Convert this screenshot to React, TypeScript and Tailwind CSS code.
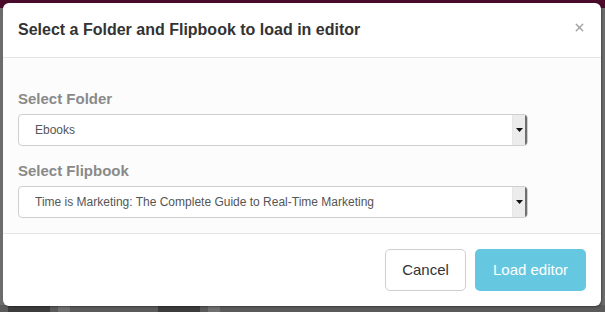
import { X } from 'lucide-react';

function SelectBox({ value }: { value: string }) {
  return (
    <div className="flex h-[32px] w-[510px] items-stretch overflow-hidden rounded-[4px] border border-[#cfcfcf] bg-white">
      <div className="flex flex-1 items-center pl-[16px] text-[12px] text-[#555]">{value}</div>
      <div className="flex w-[15px] items-center justify-center border-l border-[#e6e6e6] border-r-2 border-r-[#6f6f6f] bg-[#ececec]">
        <svg width="7" height="4" viewBox="0 0 7 4">
          <path d="M0 0h7L3.5 4z" fill="#111" />
        </svg>
      </div>
    </div>
  );
}

export default function App() {
  return (
    <div
      className="relative h-[312px] w-[605px] overflow-hidden bg-[#6c6c6c]"
      style={{ fontFamily: '"Liberation Sans", Arial, sans-serif' }}
    >
      <div className="h-[8px] bg-[#4a0b2b]" />
      <div className="absolute bottom-0 left-0 right-0 flex h-[7px] items-end gap-[8px] bg-[#5a5a5a] pl-[8px]">
        <div className="h-[6px] w-[42px] bg-[#3c3c3c]" />
        <div className="h-[6px] w-[12px] bg-[#707070]" />
        <div className="ml-[80px] h-[6px] w-[42px] bg-[#3c3c3c]" />
        <div className="h-[6px] w-[12px] bg-[#707070]" />
      </div>

      <div className="absolute left-[3px] top-[3px] flex h-[303px] w-[598px] flex-col overflow-hidden rounded-[6px] bg-white shadow-[1px_1px_2px_rgba(0,0,0,0.35)]">
        <header className="flex h-[55px] items-center justify-between border-b border-[#e5e5e5] pl-[15px] pr-[15px]">
          <h4 className="text-[16px] font-bold text-[#333]">
            Select a Folder and Flipbook to load in editor
          </h4>
          <X size={13} strokeWidth={2.6} className="mb-[6px] text-[#a0a0a0]" />
        </header>

        <div className="flex h-[175px] flex-col bg-[#fcfcfc] pl-[15px] pt-[31px]">
          <label className="text-[15px] font-bold leading-[20px] text-[#8a8a8a]">Select Folder</label>
          <div className="mt-[5px]">
            <SelectBox value="Ebooks" />
          </div>
          <label className="mt-[15px] text-[15px] font-bold leading-[20px] text-[#8a8a8a]">Select Flipbook</label>
          <div className="mt-[5px]">
            <SelectBox value="Time is Marketing: The Complete Guide to Real-Time Marketing" />
          </div>
        </div>

        <footer className="flex flex-1 items-start justify-end gap-[9px] border-t border-[#e5e5e5] pr-[15px] pt-[15px]">
          <button className="h-[42px] w-[81px] rounded-[5px] border border-[#cfcfcf] bg-white text-[15px] text-[#333]">
            Cancel
          </button>
          <button className="h-[42px] w-[111px] rounded-[5px] bg-[#66c7e1] text-[15px] text-white">
            Load editor
          </button>
        </footer>
      </div>
    </div>
  );
}
